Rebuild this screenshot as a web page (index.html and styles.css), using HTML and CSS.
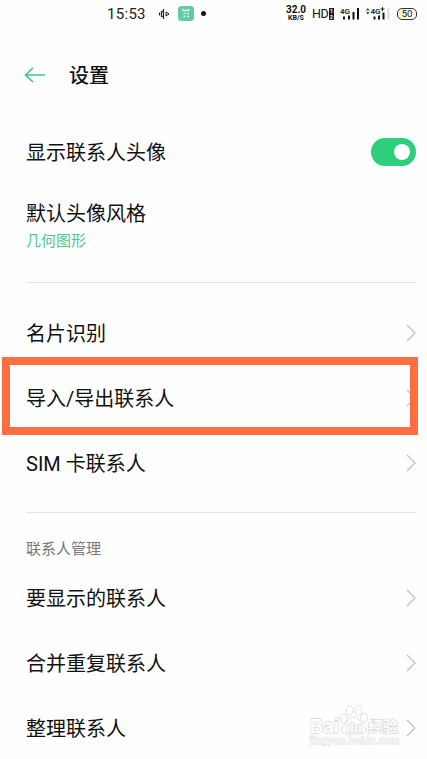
FILE: index.html
```html
<!DOCTYPE html>
<html lang="zh-CN">
<head>
    <meta charset="UTF-8">
    <meta name="viewport" content="width=device-width, initial-scale=1">
    <title>设置</title>
    <link rel="stylesheet" href="styles.css">
</head>
<body>
    <div class="status">
        <span class="time">15:53</span>
        <svg class="vibrate" width="12" height="12" viewBox="0 0 12 12">
            <path d="M1.500 4.500v3M3.500 3.500h2v5h-2zM5.500 1v10" fill="none" stroke="#222" stroke-width="1.200"/>
            <path d="M8 4l3 2-3 2z" fill="none" stroke="#222"/>
        </svg>
        <svg class="app" width="16" height="15" viewBox="0 0 16 15">
            <rect width="16" height="15" rx="3.500" fill="#62cba6"/>
            <path d="M4.500 3l1 1.500h5l1-1.500M5.500 7.500h2M9 7.500h2M5.500 10.500h2M9 10.500h2" fill="none" stroke="#e4fff5" stroke-width="1.300"/>
        </svg>
        <span class="dot"></span>
        <span class="speed"><b>32.0</b><b class="unit">KB/S</b></span>
        <span class="hd">HD</span>
        <span class="sims"><b>1</b><b>2</b></span>
        <svg class="signal" width="20" height="15" viewBox="0 0 20 15">
            <text x="0" y="7.500" class="net">4G</text>
            <path d="M4 13.500v-3M9 13.500V9.500M13.500 13.500V6M18 13.500V2" stroke="#111" stroke-width="2"/>
        </svg>
        <svg class="signal2" width="24" height="15" viewBox="0 0 24 15">
            <path d="M0 4.500L1.800 2l1.800 2.500zM0 6l1.800 2.500L3.600 6z" fill="#444"/>
            <text x="4.500" y="7.500" class="net">4G</text>
            <path d="M14.500 3h4M16.500 1v4" stroke="#222"/>
            <path d="M8.500 13.500v-3M13 13.500V9.500M17.500 13.500V6.500" stroke="#111" stroke-width="2"/>
            <path d="M22.500 13.500V2" stroke="#ddd" stroke-width="2"/>
        </svg>
        <span class="battery">50</span>
    </div>

    <div class="header">
        <svg width="22" height="18" viewBox="0 0 22 18">
            <path d="M9 2L1.500 9 9 16M1.500 9H21" fill="none" stroke="#43c68c" stroke-width="1.700"/>
        </svg>
        <h1>设置</h1>
    </div>

    <div class="row">
        <span>显示联系人头像</span>
        <span class="switch"></span>
    </div>
    <div class="style">
        <div>默认头像风格</div>
        <div class="value">几何图形</div>
    </div>

    <div class="group">
        <div class="row">
            <span>名片识别</span>
            <svg class="arrow" viewBox="0 0 10 18"><path d="M1 1l8 8-8 8"/></svg>
        </div>
        <div class="row marked">
            <span>导入/导出联系人</span>
            <svg class="arrow" viewBox="0 0 10 18"><path d="M1 1l8 8-8 8"/></svg>
        </div>
        <div class="row">
            <span>SIM 卡联系人</span>
            <svg class="arrow" viewBox="0 0 10 18"><path d="M1 1l8 8-8 8"/></svg>
        </div>
    </div>

    <div class="group manage">
        <h2>联系人管理</h2>
        <div class="row">
            <span>要显示的联系人</span>
            <svg class="arrow" viewBox="0 0 10 18"><path d="M1 1l8 8-8 8"/></svg>
        </div>
        <div class="row">
            <span>合并重复联系人</span>
            <svg class="arrow" viewBox="0 0 10 18"><path d="M1 1l8 8-8 8"/></svg>
        </div>
        <div class="row">
            <span>整理联系人</span>
            <svg class="arrow" viewBox="0 0 10 18"><path d="M1 1l8 8-8 8"/></svg>
        </div>
    </div>

    <svg class="watermark" width="94" height="46" viewBox="0 0 94 46">
        <ellipse cx="34.500" cy="15.500" rx="3.300" ry="4.500"/>
        <ellipse cx="40.500" cy="7.500" rx="3.500" ry="5"/>
        <ellipse cx="49.500" cy="7.500" rx="3.500" ry="5"/>
        <ellipse cx="55" cy="15" rx="3.300" ry="4.500"/>
        <path d="M44.500 14c-5 0-6 5-10 8-4 4-2 9 3 9h14c6 0 7-6 3-9-4-3-5-8-10-8z"/>
        <text x="1" y="30" class="bai" textLength="29" lengthAdjust="spacingAndGlyphs">Bai</text>
        <text x="37" y="28.500" class="du">du</text>
        <text x="59" y="29" class="jy">经验</text>
        <text x="1" y="41" class="site" textLength="89">jingyan.baidu.com</text>
    </svg>
</body>
</html>
```
FILE: styles.css
```css
* {
    box-sizing: border-box;
}

body {
    position: relative;
    margin: 0;
    height: 759px;
    overflow: hidden;
    background-color: #fefefe;
    color: #111;
    font-family: Roboto, "Noto Sans CJK SC", sans-serif;
    font-size: 20px;
    line-height: 30px;
}

svg {
    display: block;
    flex: none;
}

.status {
    display: flex;
    align-items: center;
    height: 27px;
    padding-left: 107px;
}

.time {
    width: 51px;
    font-size: 15px;
    letter-spacing: 0.3px;
    color: #222;
}

.app {
    margin-left: 8px;
}

.dot {
    width: 5px;
    height: 5px;
    margin-left: 7px;
    border-radius: 50%;
    background-color: #111;
}

.speed {
    width: 22px;
    margin-left: 79px;
    font-size: 10px;
    line-height: 9px;
    text-align: center;
}

.speed b {
    display: block;
    height: 9px;
}

.speed .unit {
    height: 8px;
    font-size: 7px;
    line-height: 8px;
}

.hd {
    width: 17px;
    margin-left: 5px;
    font-size: 12.5px;
    letter-spacing: -0.5px;
}

.sims b {
    display: block;
    width: 5px;
    height: 6px;
    background-color: #222;
    color: #fff;
    font-size: 5px;
    line-height: 6px;
    text-align: center;
}

.signal {
    margin-left: 6px;
}

.signal2 {
    margin-left: 6px;
}

.net {
    font-size: 8px;
    font-weight: bold;
    fill: #333;
}

.battery {
    width: 20px;
    height: 12px;
    margin-left: 7px;
    border: 1px solid #333;
    border-radius: 5px;
    background: linear-gradient(to right, #f8f3cf 50%, #fff 50%);
    font-size: 9.5px;
    line-height: 10px;
    text-align: center;
}

.header {
    display: flex;
    align-items: center;
    height: 96px;
    padding-left: 24px;
}

h1 {
    margin: 0 0 0 23px;
    padding-top: 2px;
    font-size: 20px;
    font-weight: 500;
}

.row {
    display: flex;
    align-items: center;
    justify-content: space-between;
    height: 65px;
    padding: 0 11px 0 26px;
}

.row span:first-child {
    padding-top: 2px;
}

.header + .row {
    height: 57px;
}

.switch {
    width: 45px;
    height: 28px;
    padding: 6px 6px 6px 23px;
    border-radius: 14px;
    background-color: #2dce7c;
}

.switch::after {
    content: "";
    display: block;
    width: 16px;
    height: 16px;
    border-radius: 50%;
    background-color: #fff;
}

.style {
    height: 102px;
    padding: 19px 0 0 26px;
}

.value {
    font-size: 15px;
    line-height: 24px;
    color: #4fc793;
}

.group {
    height: 230px;
    margin: 0 11px 0 26px;
    padding-top: 17px;
    border-top: 1px solid #e3e3e3;
}

.group .row {
    padding: 0;
}

.arrow {
    width: 10px;
    height: 18px;
    fill: none;
    stroke: #c2c2c2;
    stroke-width: 1.3;
}

.marked {
    position: relative;
}

/* orange frame round the import/export row */
.marked::after {
    content: "";
    position: absolute;
    top: -8px;
    left: -24px;
    right: -2px;
    height: 62px;
    border: 8px solid #fe6e41;
}

.manage {
    height: auto;
    padding-top: 20px;
}

h2 {
    margin: 0;
    font-size: 15px;
    font-weight: normal;
    line-height: 32px;
    color: #777;
}

.watermark {
    position: absolute;
    left: 309px;
    top: 703px;
    fill: #fefefe;
    stroke: #d8d8d8;
    stroke-width: 0.8;
    font-family: "Liberation Sans", "Noto Sans CJK SC", sans-serif;
    font-weight: bold;
}

.watermark text {
    paint-order: stroke;
    stroke-width: 1.4;
}

.bai {
    font-size: 21px;
}

.du {
    font-size: 13px;
}

.jy {
    font-size: 15px;
}

.watermark .site {
    font-size: 10px;
    font-weight: normal;
    stroke: #dcdcdc;
    stroke-width: 1;
}
```
